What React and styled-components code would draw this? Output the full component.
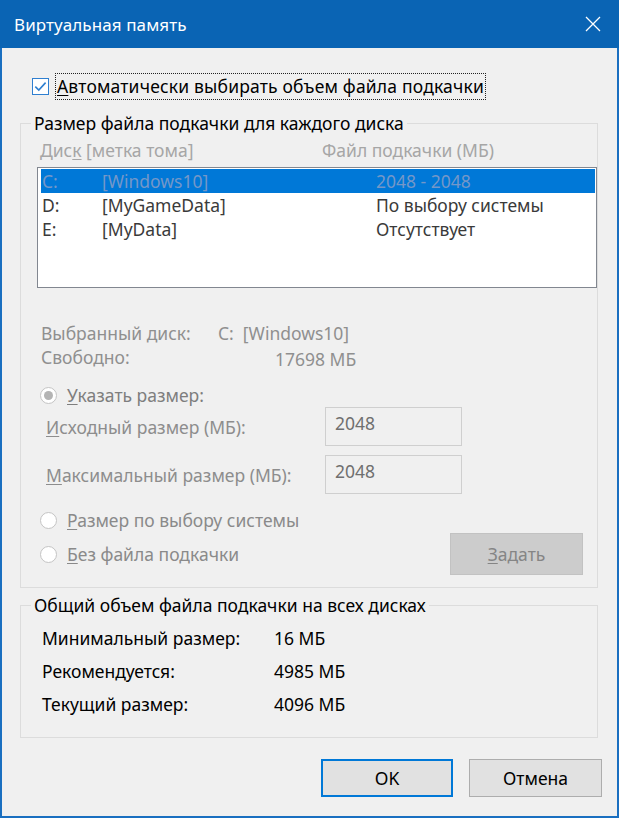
import React from 'react'
import styled, { createGlobalStyle } from 'styled-components'

const Global = createGlobalStyle`
  html, body { margin: 0; padding: 0; background: #f0f0f0; }
  body { font-family: "Noto Sans", "Open Sans", sans-serif; font-size: 17.5px; color: #000; }
  * { box-sizing: border-box; }
`

const Window = styled.div`
  width: 619px;
  height: 818px;
  background: #1a6fc0;
  padding: 0 2px 2px;
  display: flex;
  flex-direction: column;
`

const TitleBar = styled.div`
  height: 48px;
  background: #0a64b4;
  margin: 0 -2px;
  padding: 0 18px 0 14px;
  display: flex;
  align-items: center;
  justify-content: space-between;
  color: #fff;
  font-size: 17px;
  letter-spacing: 0.1px;
`

const Body = styled.div`
  flex: 1;
  background: #f0f0f0;
  padding: 25px 19px 0 18px;
  display: flex;
  flex-direction: column;
`

const CheckRow = styled.label`
  display: flex;
  align-items: center;
  margin-left: 12px;
  height: 27px;
  gap: 6px;
`

const FocusText = styled.span`
  border: 1px dotted #222;
  padding: 0 1px;
  line-height: 25px;
  letter-spacing: 0.18px;
`

const U = styled.u`
  text-underline-offset: 2px;
  text-decoration-thickness: 1px;
`

const Group = styled.fieldset`
  margin: ${p => p.$top}px 0 0;
  border: 1px solid #dcdcdc;
  padding: 0;
  min-width: 0;
`

const GroupInner = styled.div`
  padding: ${p => p.$pad};
`

const Legend = styled.legend`
  margin-left: 10px;
  padding: 0 3px;
  line-height: 22px;
`

const HeaderRow = styled.div`
  display: grid;
  grid-template-columns: 282px 1fr;
  margin-left: 3px;
  line-height: 22px;
  color: #a6a6a6;
`

const ListBox = styled.div`
  margin-top: 6px;
  height: 121px;
  border: 1px solid #828790;
  background: #fff;
  padding: 1px 1px 1px 3px;
`

const ListRow = styled.div`
  display: grid;
  grid-template-columns: 60px 274px 1fr;
  height: 24px;
  line-height: 24px;
  padding-left: 1px;
  background: ${p => (p.$selected ? '#0078d7' : 'transparent')};
  color: ${p => (p.$selected ? '#7497c8' : '#3a3a3a')};
`

const InfoRow = styled.div`
  display: grid;
  grid-template-columns: 177px 1fr;
  margin: ${p => p.$top || 0}px 0 0 4px;
  line-height: 24px;
  color: #8f8f8f;
`

const InfoValue = styled.span`
  padding-left: ${p => p.$shift || 0}px;
  padding-top: ${p => p.$drop || 0}px;
`

const RadioRow = styled.div`
  display: flex;
  align-items: center;
  gap: 10px;
  margin-top: ${p => p.$top || 0}px;
  height: 24px;
  color: ${p => p.$color || '#8a8a8a'};
  margin-left: 3px;
`

const RadioDot = styled.span`
  width: 17px;
  height: 17px;
  border-radius: 50%;
  border: 1px solid #c4c4c4;
  background: #fff;
  display: flex;
  align-items: center;
  justify-content: center;
  &::after {
    content: '';
    width: 9px;
    height: 9px;
    border-radius: 50%;
    background: ${p => (p.$on ? '#b4b4b4' : 'transparent')};
  }
`

const FieldRow = styled.div`
  display: grid;
  grid-template-columns: 279px 137px;
  align-items: center;
  margin: ${p => p.$top}px 0 0 9px;
  color: #8d8d8d;
`

const Input = styled.div`
  height: 39px;
  border: 1px solid #cfcfcf;
  background: #f0f0f0;
  color: #6f6f6f;
  padding: 4px 9px;
  line-height: 22px;
`

const BottomRow = styled.div`
  display: flex;
  align-items: center;
  justify-content: space-between;
  margin-top: 1px;
  padding-right: 14px;
`

const Button = styled.button`
  width: ${p => p.$w || 133}px;
  height: ${p => p.$h || 38}px;
  font: inherit;
  background: ${p => (p.$disabled ? '#cccccc' : '#e1e1e1')};
  color: ${p => (p.$disabled ? '#858585' : '#000')};
  border: ${p => (p.$primary ? '2px solid #0078d7' : p.$disabled ? '1px solid #c2c2c2' : '1px solid #adadad')};
  padding: 0;
`

const StatRow = styled.div`
  display: grid;
  grid-template-columns: 232px 1fr;
  height: 33px;
  line-height: 33px;
`

const Buttons = styled.div`
  display: flex;
  justify-content: flex-end;
  gap: 16px;
  margin: 21px -4px 0 0;
`

const CheckBox = () => (
  <svg width="17" height="17" viewBox="0 0 17 17">
    <rect x="0.5" y="0.5" width="16" height="16" fill="#fff" stroke="#2f7fd0" />
    <path d="M3.3 8.6 L6.8 12 L13.6 4.6" fill="none" stroke="#2f7fd0" strokeWidth="1.6" />
  </svg>
)

const CloseIcon = () => (
  <svg width="16" height="16" viewBox="0 0 16 16">
    <path d="M1 1 L15 15 M15 1 L1 15" stroke="#fff" strokeWidth="1.3" />
  </svg>
)

const drives = [
  { d: 'C:', label: '[Windows10]', size: '2048 - 2048', selected: true },
  { d: 'D:', label: '[MyGameData]', size: 'По выбору системы' },
  { d: 'E:', label: '[MyData]', size: 'Отсутствует' },
]

export default function App() {
  return (
    <>
      <Global />
      <Window>
        <TitleBar>
          <span>Виртуальная память</span>
          <CloseIcon />
        </TitleBar>
        <Body>
          <CheckRow>
            <CheckBox />
            <FocusText><U>А</U>втоматически выбирать объем файла подкачки</FocusText>
          </CheckRow>

          <Group $top={12}>
            <Legend>Размер файла подкачки для каждого диска</Legend>
            <GroupInner $pad="5px 0 12px 16px">
              <HeaderRow>
                <span>Дис<U>к</U> [метка тома]</span>
                <span>Файл подкачки (МБ)</span>
              </HeaderRow>
              <ListBox>
                {drives.map(r => (
                  <ListRow key={r.d} $selected={r.selected}>
                    <span>{r.d}</span>
                    <span>{r.label}</span>
                    <span>{r.size}</span>
                  </ListRow>
                ))}
              </ListBox>
              <InfoRow $top={33}>
                <span>Выбранный диск:</span>
                <InfoValue>C:&nbsp;&nbsp;[Windows10]</InfoValue>
              </InfoRow>
              <InfoRow>
                <span>Свободно:</span>
                <InfoValue $shift={57} $drop={2}>17698 МБ</InfoValue>
              </InfoRow>
              <RadioRow $top={12} $color="#7e7e7e">
                <RadioDot $on />
                <span><U>У</U>казать размер:</span>
              </RadioRow>
              <FieldRow $top={0}>
                <span><U>И</U>сходный размер (МБ):</span>
                <Input>2048</Input>
              </FieldRow>
              <FieldRow $top={9}>
                <span><U>М</U>аксимальный размер (МБ):</span>
                <Input>2048</Input>
              </FieldRow>
              <RadioRow $top={14}>
                <RadioDot />
                <span><U>Р</U>азмер по выбору системы</span>
              </RadioRow>
              <BottomRow>
                <RadioRow>
                  <RadioDot />
                  <span><U>Б</U>ез файла подкачки</span>
                </RadioRow>
                <Button $disabled $w={133} $h={42}><U>З</U>адать</Button>
              </BottomRow>
            </GroupInner>
          </Group>

          <Group $top={6}>
            <Legend>Общий объем файла подкачки на всех дисках</Legend>
            <GroupInner $pad="6px 0 16px 21px">
              <StatRow><span>Минимальный размер:</span><span>16 МБ</span></StatRow>
              <StatRow><span>Рекомендуется:</span><span>4985 МБ</span></StatRow>
              <StatRow><span>Текущий размер:</span><span>4096 МБ</span></StatRow>
            </GroupInner>
          </Group>

          <Buttons>
            <Button $primary $w={132}>OK</Button>
            <Button $w={133}>Отмена</Button>
          </Buttons>
        </Body>
      </Window>
    </>
  )
}
